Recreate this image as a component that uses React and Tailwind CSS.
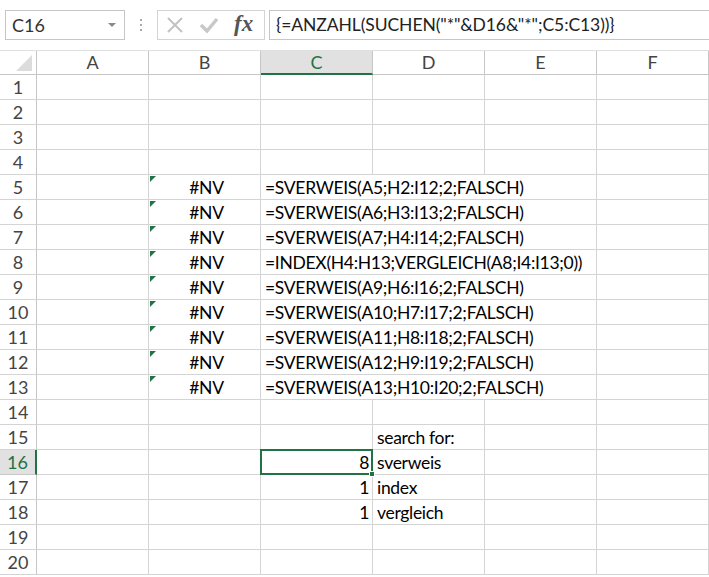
import React from 'react';

const font = { fontFamily: 'Lato, "Open Sans", sans-serif' };

const cols = ['A', 'B', 'C', 'D', 'E', 'F'];

const formulas = {
  5: '=SVERWEIS(A5;H2:I12;2;FALSCH)',
  6: '=SVERWEIS(A6;H3:I13;2;FALSCH)',
  7: '=SVERWEIS(A7;H4:I14;2;FALSCH)',
  8: '=INDEX(H4:H13;VERGLEICH(A8;I4:I13;0))',
  9: '=SVERWEIS(A9;H6:I16;2;FALSCH)',
  10: '=SVERWEIS(A10;H7:I17;2;FALSCH)',
  11: '=SVERWEIS(A11;H8:I18;2;FALSCH)',
  12: '=SVERWEIS(A12;H9:I19;2;FALSCH)',
  13: '=SVERWEIS(A13;H10:I20;2;FALSCH)',
};

const results = {
  15: { d: 'search for:' },
  16: { c: '8', d: 'sverweis' },
  17: { c: '1', d: 'index' },
  18: { c: '1', d: 'vergleich' },
};

const txt = 'text-[17.5px] leading-[22px] tracking-[-0.3px]';

const Cell = ({ children, className = '' }) => (
  <div className={`relative h-[25px] w-[112px] shrink-0 border-r border-b border-[#d4d4d4] flex items-end ${className}`}>
    {children}
  </div>
);

const RowHeader = ({ n, active }) => (
  <div
    className={`h-[25px] w-[37px] shrink-0 border-b flex items-end justify-center text-[18px] leading-[23px] ${
      active
        ? 'bg-[#e1e1e1] text-[#217346] border-[#c6c6c6] border-r-2 border-r-[#217346]'
        : 'bg-white text-[#444] border-[#d4d4d4] border-r border-r-[#c6c6c6]'
    }`}
  >
    {n}
  </div>
);

const ErrorMark = () => (
  <div className="absolute left-[1px] top-[1px] w-0 h-0 border-t-[6px] border-r-[6px] border-t-[#217346] border-r-transparent" />
);

const Row = ({ n }) => {
  const f = formulas[n];
  const r = results[n];
  return (
    <div className="flex">
      <RowHeader n={n} active={n === 16} />
      <Cell />
      {f ? (
        <>
          <Cell className="justify-center">
            <ErrorMark />
            <span className={`${txt} pl-[4px]`}>#NV</span>
          </Cell>
          <div className="h-[25px] w-[336px] shrink-0 border-r border-b border-[#d4d4d4] flex items-end pl-[4px] overflow-visible whitespace-nowrap">
            <span className={txt}>{f}</span>
          </div>
        </>
      ) : (
        <>
          <Cell />
          <Cell className={`justify-end pr-[3px] ${n === 16 ? 'z-10' : ''}`}>
            {n === 16 && (
              <div className="absolute -left-[1px] -top-[1px] w-[113px] h-[26px] border-2 border-[#217346]">
                <div className="absolute -right-[4px] -bottom-[4px] w-[6px] h-[6px] bg-[#217346] border border-white" />
              </div>
            )}
            {r && r.c && <span className={txt}>{r.c}</span>}
          </Cell>
          <Cell className="pl-[4px] whitespace-nowrap">
            {r && r.d && <span className={txt}>{r.d}</span>}
          </Cell>
          <Cell />
        </>
      )}
      <Cell />
    </div>
  );
};

export default function App() {
  const rows = Array.from({ length: 20 }, (_, i) => i + 1);
  return (
    <div className="w-[709px] h-[577px] overflow-hidden bg-white text-black" style={font}>
      {/* formula bar */}
      <div className="h-[50px] flex items-start pt-[10px] pl-[5px]">
        <div className="w-[120px] h-[30px] border border-[#c6c6c6] flex items-center justify-between pl-[6px] pr-[8px]">
          <span className="text-[18px] text-[#333]">C16</span>
          <span className="w-0 h-0 border-l-[4px] border-r-[4px] border-t-[4px] border-l-transparent border-r-transparent border-t-[#8a8a8a]" />
        </div>
        <div className="w-[32px] h-[30px] flex flex-col items-center justify-center gap-[3px]">
          <span className="w-[2px] h-[2px] bg-[#aaa]" />
          <span className="w-[2px] h-[2px] bg-[#aaa]" />
          <span className="w-[2px] h-[2px] bg-[#aaa]" />
        </div>
        <div className="w-[108px] h-[30px] border border-[#d4d4d4] flex items-center pl-[8px] gap-[15px]">
          <svg width="18" height="18" viewBox="0 0 18 18">
            <path d="M2 2 L16 16 M16 2 L2 16" stroke="#c2c2c2" strokeWidth="2" fill="none" />
          </svg>
          <svg width="20" height="18" viewBox="0 0 20 18">
            <path d="M2 9 L8 15 L18 3" stroke="#c8c8c8" strokeWidth="3.5" fill="none" />
          </svg>
          <span
            className="text-[23px] italic font-bold text-[#555] leading-none -mt-[3px]"
            style={{ fontFamily: '"Liberation Serif", serif' }}
          >
            fx
          </span>
        </div>
        <div className="ml-[4px] flex-1 h-[30px] border border-[#c6c6c6] border-r-0 flex items-center pl-[6px]">
          <span className="text-[17.5px] tracking-[-0.08px] text-[#222] whitespace-nowrap">
            {'{=ANZAHL(SUCHEN("*"&D16&"*";C5:C13))}'}
          </span>
        </div>
      </div>

      {/* column headers */}
      <div className="flex border-t border-[#e0e0e0]">
        <div className="relative h-[24px] w-[37px] shrink-0 border-r border-b border-[#c6c6c6]">
          <div className="absolute right-[4px] bottom-[3px] w-0 h-0 border-b-[16px] border-l-[16px] border-b-[#dcdcdc] border-l-transparent" />
        </div>
        {cols.map((c) => (
          <div
            key={c}
            className={`h-[24px] w-[112px] shrink-0 flex items-center justify-center text-[18px] ${
              c === 'C'
                ? 'bg-[#e1e1e1] text-[#217346] border-r border-r-[#c6c6c6] border-b-2 border-b-[#217346]'
                : 'text-[#444] border-r border-b border-[#c6c6c6]'
            }`}
          >
            {c}
          </div>
        ))}
      </div>

      {rows.map((n) => (
        <Row key={n} n={n} />
      ))}
    </div>
  );
}
